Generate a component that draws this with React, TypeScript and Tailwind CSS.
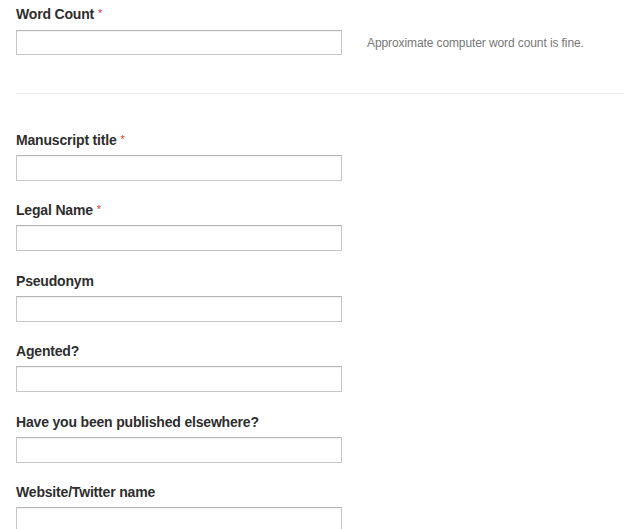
import React from "react";

const Req = () => (
  <span className="ml-[4px] align-top text-[11px] leading-[18px] font-normal text-[#e0383e]">*</span>
);

function Field({ label, required }: { label: string; required?: boolean }) {
  return (
    <div className="mb-[19.4px]">
      <label className="block text-[14px] leading-[20px] font-bold tracking-[-0.18px] text-[#2e2e2e]">
        {label}
        {required && <Req />}
      </label>
      <input
        type="text"
        className="mt-[5px] block h-[26px] w-[326px] border border-[#c6c6c6] border-t-[#b5b5b5] bg-white px-2 text-[14px] shadow-[inset_0_1px_1px_rgba(0,0,0,0.06)] outline-none"
      />
    </div>
  );
}

export default function App() {
  return (
    <div
      className="min-h-[529px] w-[624px] overflow-hidden bg-white"
      style={{ fontFamily: '"Liberation Sans", Arial, sans-serif' }}
    >
      <div className="pl-[16px] pt-[4px]">
        <label className="block text-[14px] leading-[20px] font-bold tracking-[-0.18px] text-[#2e2e2e]">
          Word Count
          <Req />
        </label>
        <div className="mt-[6px] flex items-center gap-[25px]">
          <input
            type="text"
            className="block h-[25px] w-[326px] border border-[#c6c6c6] border-t-[#b5b5b5] bg-white px-2 text-[14px] shadow-[inset_0_1px_1px_rgba(0,0,0,0.06)] outline-none"
          />
          <span className="text-[12px] leading-[16px] tracking-[-0.1px] text-[#777]">
            Approximate computer word count is fine.
          </span>
        </div>
        <div className="mt-[38px] border-t border-[#eeeeee]" />
        <div className="pt-[36px]">
          <Field label="Manuscript title" required />
          <Field label="Legal Name" required />
          <Field label="Pseudonym" />
          <Field label="Agented?" />
          <Field label="Have you been published elsewhere?" />
          <Field label="Website/Twitter name" />
        </div>
      </div>
    </div>
  );
}
